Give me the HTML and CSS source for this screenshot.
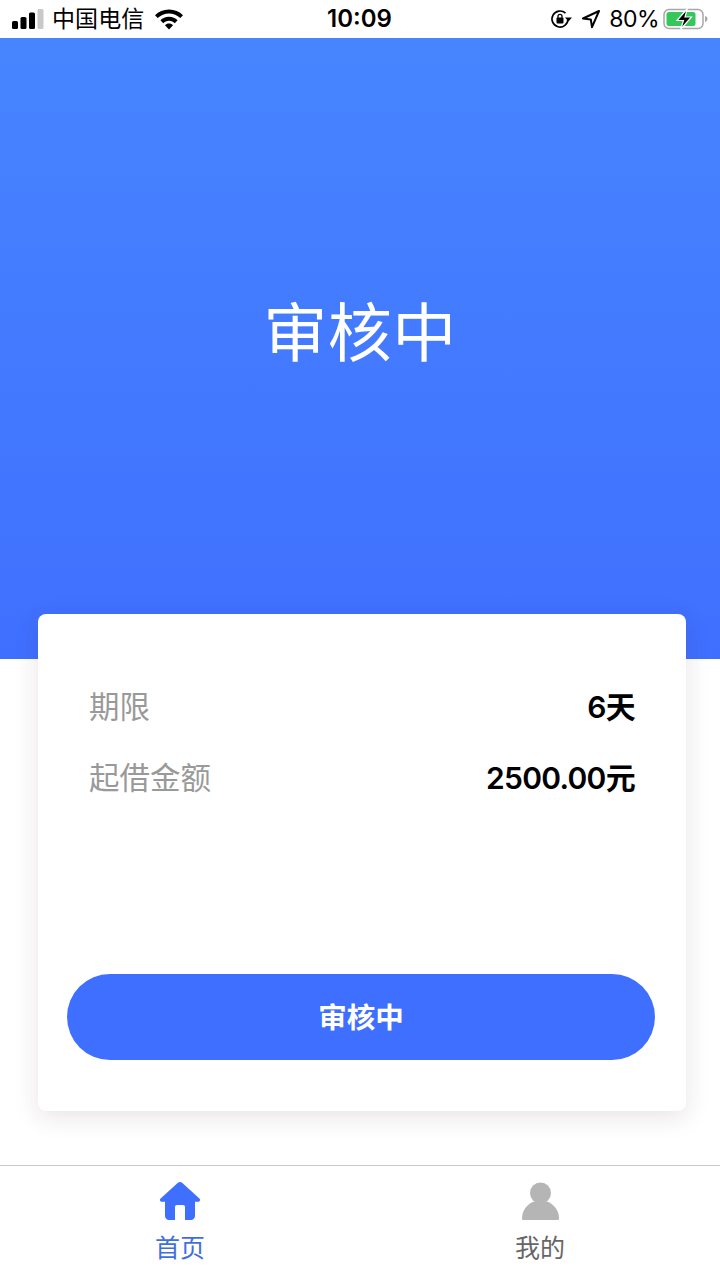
FILE: index.html
```html
<!DOCTYPE html>
<html lang="zh-CN">
<head>
<meta charset="utf-8">
<title>审核中</title>
<link rel="stylesheet" href="styles.css">
</head>
<body>
<div class="app">
  <header class="status">
    <div class="status-left">
      <svg class="signal" width="32" height="20" viewBox="0 0 32 20"><rect x="0" y="12" width="6" height="8" rx="1.500" fill="#000"/><rect x="8.500" y="8" width="6" height="12" rx="1.500" fill="#000"/><rect x="17" y="3.500" width="6" height="16.500" rx="1.500" fill="#000"/><rect x="25.500" y="0" width="6" height="20" rx="1.500" fill="#c9c9c9"/></svg>
      <span class="carrier">中国电信</span>
      <svg class="wifi" width="30" height="22" viewBox="0 0 30 22"><path d="M15 1.500C9.500 1.500 4.500 3.700 1 7.200l2.700 2.900C6.600 7.200 10.600 5.500 15 5.500s8.400 1.700 11.300 4.600L29 7.200C25.500 3.700 20.500 1.500 15 1.500z" fill="#000"/><path d="M15 8.800c-3.400 0-6.400 1.300-8.600 3.500l2.800 2.900C10.700 13.700 12.700 12.800 15 12.800s4.300.9 5.800 2.400l2.800-2.900c-2.200-2.200-5.200-3.500-8.600-3.500z" fill="#000"/><path d="M15 15.600c-1.600 0-3 .6-4 1.600l4 4.200 4-4.200c-1-1-2.400-1.600-4-1.600z" fill="#000"/></svg>
    </div>
    <div class="time">10:09</div>
    <div class="status-right">
      <svg class="lock" width="23" height="20" viewBox="0 0 23 20"><path d="M18 10a8 8 0 1 1-2.500-5.800" fill="none" stroke="#000" stroke-width="1.700"/><path d="M22 8.500h-7l3.500 4z" fill="#000"/><rect x="6.500" y="8.500" width="7" height="6" rx="1" fill="#000"/><path d="M8 9V7.300a2 2 0 0 1 4 0V9" fill="none" stroke="#000" stroke-width="1.300"/></svg>
      <svg class="arrow" width="20" height="20" viewBox="0 0 20 20"><path d="M18 2 2 9.500l7.800.9 1.200 7.800z" fill="none" stroke="#000" stroke-width="2" stroke-linejoin="round"/></svg>
      <span class="battery-text">80%</span>
      <svg class="battery" width="46" height="22" viewBox="0 0 46 22"><rect x="1" y="1.500" width="39" height="19" rx="5" fill="none" stroke="#a8a8a8" stroke-width="1.500"/><rect x="3.500" y="4" width="29" height="14" rx="2.500" fill="#35c759"/><path d="M42 8v6c1.600-.4 2.500-1.600 2.500-3S43.600 8.400 42 8z" fill="#a8a8a8"/><path d="M24.500 0.500 14 12.500h6.500L17.500 21.500 28.500 9h-6.500z" fill="#000" stroke="#fff" stroke-width="1.200"/></svg>
    </div>
  </header>

  <section class="hero">
    <h1 class="hero-title">审核中</h1>
  </section>

  <main class="card">
    <div class="rows">
      <div class="row"><span class="label">期限</span><span class="value">6天</span></div>
      <div class="row"><span class="label">起借金额</span><span class="value">2500.00元</span></div>
    </div>
    <button class="action" type="button">审核中</button>
  </main>

  <nav class="tabbar">
    <div class="tab tab-active">
      <svg class="tab-icon" width="42" height="40" viewBox="0 0 42 40"><path d="M21 1c.8 0 1.500.3 2.100.8l17.300 15.600c1.300 1.200.5 3.300-1.200 3.300H36V35c0 2.200-1.800 4-4 4h-6V26c0-1.200-.8-2-2-2h-6c-1.200 0-2 .8-2 2v13h-6c-2.200 0-4-1.800-4-4V20.700H2.800c-1.700 0-2.500-2.100-1.200-3.300L18.900 1.800C19.500 1.300 20.200 1 21 1z" fill="#3f6fff"/></svg>
      <span class="tab-label">首页</span>
    </div>
    <div class="tab">
      <svg class="tab-icon" width="42" height="40" viewBox="0 0 42 40"><circle cx="21.500" cy="12" r="10.500" fill="#b5b5b5"/><path d="M3 37.500C3 29 8.500 22.800 15 20.500h13C34.500 22.800 40 29 40 37.500c0 1-.7 1.500-1.500 1.500h-34C3.700 39 3 38.500 3 37.500z" fill="#b5b5b5"/></svg>
      <span class="tab-label">我的</span>
    </div>
  </nav>
</div>
</body>
</html>
```

FILE: styles.css
```css
* { box-sizing: border-box; }
html, body { margin: 0; padding: 0; }
body {
  width: 720px;
  height: 1280px;
  overflow: hidden;
  background: #fff;
  font-family: "Liberation Sans", "Noto Sans CJK SC", sans-serif;
}
.app { width: 720px; height: 1280px; display: flex; flex-direction: column; }

.status {
  height: 38px;
  flex: none;
  display: grid;
  grid-template-columns: 1fr auto 1fr;
  align-items: center;
  padding: 0 11px 0 12px;
  color: #000;
  background: #fff;
  font-family: Inter, "Noto Sans CJK SC", sans-serif;
}
.status-left { display: flex; align-items: center; }
.signal { margin-right: 8px; }
.carrier { font-size: 23px; line-height: 38px; margin-right: 10px; letter-spacing: 0.100px; }
.time { font-size: 24px; font-weight: 600; line-height: 38px; margin-left: -2px; }
.status-right { display: flex; align-items: center; justify-content: flex-end; }
.lock { margin-right: 8px; }
.arrow { margin-right: 8px; }
.battery-text { font-size: 23px; line-height: 38px; margin-right: 4px; letter-spacing: -0.500px; }

.hero {
  height: 621px;
  flex: none;
  background: linear-gradient(180deg, #4785ff 0%, #3f6fff 100%);
  display: flex;
  justify-content: center;
  padding-top: 254px;
}
.hero-title {
  margin: 0;
  font-size: 64px;
  font-weight: 400;
  line-height: 84px;
  height: 84px;
  color: #fff;
  letter-spacing: 0.500px;
}

.card {
  flex: none;
  width: 648px;
  height: 497px;
  margin: -45px 0 0 38px;
  background: #fff;
  border-radius: 8px;
  box-shadow: 0 6px 24px rgba(80, 40, 70, 0.130);
  padding: 73px 31px 51px 29px;
  display: flex;
  flex-direction: column;
  justify-content: space-between;
}
.rows { display: flex; flex-direction: column; gap: 35px; padding: 0 20px 0 22px; }
.row { display: flex; justify-content: space-between; align-items: center; height: 36px; }
.label { font-size: 30.500px; color: #999; }
.value { font-family: Inter, "Noto Sans CJK SC", sans-serif; font-size: 30px; font-weight: 600; color: #000; letter-spacing: -0.700px; }
.action {
  width: 100%;
  height: 86px;
  border: 0;
  border-radius: 43px;
  background: #3f6fff;
  color: #fff;
  font-family: inherit;
  font-size: 28.500px;
  font-weight: 700;
  padding: 0 0 3px;
}

.tabbar {
  margin-top: 54px;
  flex: none;
  height: 115px;
  border-top: 1px solid #c8c8c8;
  display: flex;
  background: #fff;
}
.tab { flex: 1; display: flex; flex-direction: column; align-items: center; padding-top: 15px; color: #666; }
.tab-icon { display: block; }
.tab-label { font-size: 25px; line-height: 36px; margin-top: 9px; }
.tab-active .tab-label { color: #3f6fdf; }
```
